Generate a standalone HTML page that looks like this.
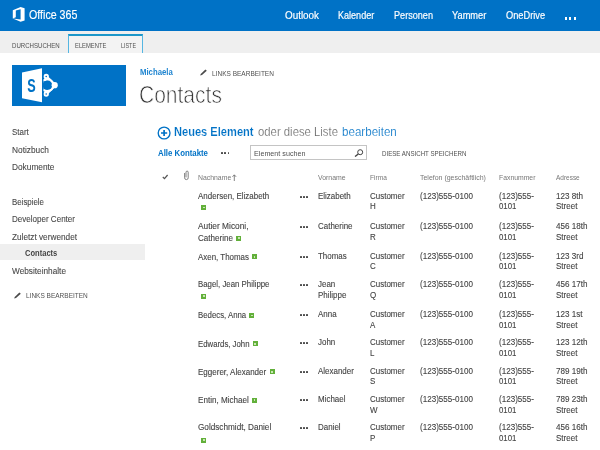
<!DOCTYPE html>
<html><head><meta charset="utf-8">
<style>
html,body{margin:0;padding:0;}
body{width:600px;height:450px;overflow:hidden;background:#fff;font-family:"Liberation Sans",sans-serif;position:relative;}
.a{position:absolute;}
.t{position:absolute;white-space:nowrap;transform-origin:0 0;}
.star{position:absolute;width:5px;height:5px;background:#62b03a;}
.star i{position:absolute;left:1.6px;top:1.6px;width:1.8px;height:1.8px;background:#c9e6b4;}
.dots{position:absolute;width:9px;height:2px;}
.dots i{position:absolute;top:0;width:1.9px;height:2px;background:#4a4a4a;border-radius:30%;}
.dots i:nth-child(1){left:0}.dots i:nth-child(2){left:3.15px}.dots i:nth-child(3){left:6.3px}
</style></head><body>
<div class="a" style="left:0;top:0;width:600px;height:30.5px;background:#0072c6;"></div>
<div class="a" style="left:0;top:30.5px;width:600px;height:22.2px;background:#efefef;"></div>
<div class="a" style="left:68px;top:34.3px;width:75px;height:18.4px;box-sizing:border-box;background:#f3f3f3;border-left:1.2px solid #55b6e2;border-right:1.2px solid #55b6e2;border-top:2.2px solid #1d97c9;"></div>
<!-- office logo -->
<svg class="a" style="left:12px;top:6px" width="14" height="17" viewBox="0 0 14 17"><path d="M0.8 4.2 L8.6 1 L12.6 2.2 V14.4 L8.6 15.8 L0.8 12.6 L8.6 13.6 V3.2 L3.8 4.4 V11.2 L0.8 12.6 Z" fill="#fff"/></svg>
<!-- top dots -->
<div class="a" style="left:564.6px;top:17.3px;width:2.3px;height:2.3px;background:#fff;"></div>
<div class="a" style="left:569.1px;top:17.3px;width:2.3px;height:2.3px;background:#fff;"></div>
<div class="a" style="left:573.6px;top:17.3px;width:2.3px;height:2.3px;background:#fff;"></div>
<!-- sharepoint logo -->
<div class="a" style="left:12px;top:65px;width:114px;height:40.5px;background:#0072c6;"></div>
<svg class="a" style="left:12px;top:65px;will-change:transform" width="114" height="41" viewBox="0 0 114 41">
<defs><clipPath id="cp"><rect x="31.4" y="0" width="40" height="41"/></clipPath></defs>
<g clip-path="url(#cp)">
<path d="M34 11.5 L42.8 20.2 L34 29" fill="none" stroke="#fff" stroke-width="3.1" stroke-linejoin="round"/>
<circle cx="35.2" cy="20.2" r="5.8" fill="none" stroke="#fff" stroke-width="2.6"/>
<circle cx="35.7" cy="20.2" r="4.6" fill="#0072c6"/><rect x="30" y="16.2" width="5" height="8" fill="#0072c6"/>
<circle cx="34.2" cy="11.5" r="2.7" fill="#fff"/><circle cx="42.7" cy="20.2" r="3.1" fill="#fff"/><circle cx="34.2" cy="29" r="2.7" fill="#fff"/>
<circle cx="34.2" cy="11.5" r="0.8" fill="#0072c6"/><circle cx="34.2" cy="29" r="0.8" fill="#0072c6"/>
</g>
<path d="M10 7.5 L30 3.2 V37.2 L10 33.2 Z" fill="#fff"/>
<text transform="translate(15.2,26.7) scale(0.72,1)" font-family="Liberation Sans" font-weight="bold" font-size="17.6" fill="#0072c6">S</text>
</svg>
<!-- nav selected -->
<div class="a" style="left:0;top:244.2px;width:145px;height:16.3px;background:#efefef;"></div>
<!-- pencils -->
<svg class="a" style="left:200px;top:69px" width="8" height="7" viewBox="0 0 8 7"><path d="M0.2 6.6 L0.7 4.9 L5.4 0.4 L6.8 1.7 L2 6.1 Z" fill="#4a4a4a"/></svg>
<svg class="a" style="left:13.6px;top:291.8px" width="8" height="7" viewBox="0 0 8 7"><path d="M0.2 6.6 L0.7 4.9 L5.4 0.4 L6.8 1.7 L2 6.1 Z" fill="#4a4a4a"/></svg>
<!-- plus circle -->
<svg class="a" style="left:157px;top:126px" width="14" height="14" viewBox="0 0 14 14"><circle cx="7.1" cy="7" r="5.9" fill="none" stroke="#0072c6" stroke-width="1.35"/><path d="M7.1 3.9 V10.1 M4 7 H10.2" stroke="#0072c6" stroke-width="1.7"/></svg>
<!-- view dots -->
<div class="dots" style="left:221.3px;top:152.2px"><i></i><i></i><i></i></div>
<!-- search box -->
<div class="a" style="left:249.5px;top:145.4px;width:117.6px;height:14.6px;box-sizing:border-box;border:1px solid #c4c4c4;background:#fff;"></div>
<svg class="a" style="left:354px;top:149px" width="10" height="8" viewBox="0 0 10 8"><circle cx="6.2" cy="3.2" r="2.5" fill="none" stroke="#444" stroke-width="1"/><path d="M4.3 5 L1 7.6" stroke="#444" stroke-width="1.3"/></svg>
<!-- header icons -->
<svg class="a" style="left:161.5px;top:174px" width="8" height="6" viewBox="0 0 8 6"><path d="M0.8 3 L2.5 4.7 L5.6 1" fill="none" stroke="#555" stroke-width="1.2"/></svg>
<svg class="a" style="left:182.6px;top:170.4px" width="7" height="11" viewBox="0 0 7 11"><path d="M1.6 3 V7.8 A1.8 1.8 0 0 0 5.2 7.8 V2.2 A1.1 1.1 0 0 0 3 2.2 V7.4" fill="none" stroke="#7a7a7a" stroke-width="0.95"/></svg>
<svg class="a" style="left:232px;top:173.5px" width="5" height="8" viewBox="0 0 5 8"><path d="M2.3 7 V1 M0.5 2.8 L2.3 0.8 L4.1 2.8" fill="none" stroke="#666" stroke-width="0.8"/></svg>
<div class="star" style="left:201.2px;top:205.0px"><i></i></div><div class="star" style="left:236.2px;top:235.5px"><i></i></div><div class="star" style="left:252.0px;top:254.2px"><i></i></div><div class="star" style="left:201.2px;top:293.8px"><i></i></div><div class="star" style="left:249.2px;top:313.0px"><i></i></div><div class="star" style="left:252.5px;top:341.3px"><i></i></div><div class="star" style="left:269.5px;top:369.2px"><i></i></div><div class="star" style="left:252.0px;top:397.5px"><i></i></div><div class="star" style="left:201.2px;top:437.5px"><i></i></div>
<div class="dots" style="left:299.9px;top:196px"><i></i><i></i><i></i></div><div class="dots" style="left:299.9px;top:226px"><i></i><i></i><i></i></div><div class="dots" style="left:299.9px;top:256px"><i></i><i></i><i></i></div><div class="dots" style="left:299.9px;top:284px"><i></i><i></i><i></i></div><div class="dots" style="left:299.9px;top:314px"><i></i><i></i><i></i></div><div class="dots" style="left:299.9px;top:342px"><i></i><i></i><i></i></div><div class="dots" style="left:299.9px;top:371px"><i></i><i></i><i></i></div><div class="dots" style="left:299.9px;top:399px"><i></i><i></i><i></i></div><div class="dots" style="left:299.9px;top:427px"><i></i><i></i><i></i></div>
<div style="position:absolute;left:0;top:0;width:600px;height:450px;will-change:transform;"><div class="t" style="left:28.8px;top:9px;font-size:12.8px;line-height:12.8px;color:#fff;-webkit-text-stroke:0.15px #fff;transform:scaleX(0.833)">Office 365</div>
<div class="t" style="left:284.7px;top:10px;font-size:11px;line-height:11px;color:#fff;-webkit-text-stroke:0.18px #fff;transform:scaleX(0.897)">Outlook</div>
<div class="t" style="left:338.0px;top:10px;font-size:11px;line-height:11px;color:#fff;-webkit-text-stroke:0.18px #fff;transform:scaleX(0.822)">Kalender</div>
<div class="t" style="left:393.8px;top:10px;font-size:11px;line-height:11px;color:#fff;-webkit-text-stroke:0.18px #fff;transform:scaleX(0.828)">Personen</div>
<div class="t" style="left:451.8px;top:10px;font-size:11px;line-height:11px;color:#fff;-webkit-text-stroke:0.18px #fff;transform:scaleX(0.842)">Yammer</div>
<div class="t" style="left:505.6px;top:10px;font-size:11px;line-height:11px;color:#fff;-webkit-text-stroke:0.18px #fff;transform:scaleX(0.841)">OneDrive</div>
<div class="t" style="left:12.0px;top:42px;font-size:7.8px;line-height:7.8px;color:#505050;transform:scaleX(0.781)">DURCHSUCHEN</div>
<div class="t" style="left:75.3px;top:42px;font-size:7.8px;line-height:7.8px;color:#505050;transform:scaleX(0.747)">ELEMENTE</div>
<div class="t" style="left:120.8px;top:42px;font-size:7.8px;line-height:7.8px;color:#505050;transform:scaleX(0.692)">LISTE</div>
<div class="t" style="left:139.9px;top:68px;font-size:8.4px;line-height:8.4px;color:#1e84d0;font-weight:bold;transform:scaleX(0.927)">Michaela</div>
<div class="t" style="left:212.1px;top:70px;font-size:7.6px;line-height:7.6px;color:#505050;transform:scaleX(0.858)">LINKS BEARBEITEN</div>
<div class="t" style="left:138.5px;top:84px;font-size:23.4px;line-height:23.4px;color:#333;-webkit-text-stroke:0.7px #fff;transform:scaleX(0.898)">Contacts</div>
<div class="t" style="left:12.0px;top:128px;font-size:9.0px;line-height:9.0px;color:#484848;-webkit-text-stroke:0.1px #484848;transform:scaleX(0.883)">Start</div>
<div class="t" style="left:12.0px;top:146px;font-size:9.0px;line-height:9.0px;color:#484848;-webkit-text-stroke:0.1px #484848;transform:scaleX(0.924)">Notizbuch</div>
<div class="t" style="left:12.0px;top:163px;font-size:9.0px;line-height:9.0px;color:#484848;-webkit-text-stroke:0.1px #484848;transform:scaleX(0.923)">Dokumente</div>
<div class="t" style="left:12.0px;top:198px;font-size:9.0px;line-height:9.0px;color:#484848;-webkit-text-stroke:0.1px #484848;transform:scaleX(0.876)">Beispiele</div>
<div class="t" style="left:12.0px;top:215px;font-size:9.0px;line-height:9.0px;color:#484848;-webkit-text-stroke:0.1px #484848;transform:scaleX(0.893)">Developer Center</div>
<div class="t" style="left:12.0px;top:233px;font-size:9.0px;line-height:9.0px;color:#484848;-webkit-text-stroke:0.1px #484848;transform:scaleX(0.915)">Zuletzt verwendet</div>
<div class="t" style="left:25.0px;top:249px;font-size:8.8px;line-height:8.8px;color:#444;font-weight:bold;transform:scaleX(0.858)">Contacts</div>
<div class="t" style="left:12.0px;top:267px;font-size:9.0px;line-height:9.0px;color:#484848;-webkit-text-stroke:0.1px #484848;transform:scaleX(0.917)">Websiteinhalte</div>
<div class="t" style="left:25.8px;top:292px;font-size:7.6px;line-height:7.6px;color:#505050;transform:scaleX(0.856)">LINKS BEARBEITEN</div>
<div class="t" style="left:174.2px;top:126px;font-size:12.2px;line-height:12.2px;color:#0072c6;font-weight:bold;-webkit-text-stroke:0.15px #fff;transform:scaleX(0.910)">Neues Element</div>
<div class="t" style="left:257.6px;top:126px;font-size:12px;line-height:12px;color:#606060;-webkit-text-stroke:0.22px #fff;transform:scaleX(0.944)">oder diese Liste</div>
<div class="t" style="left:342.0px;top:126px;font-size:12px;line-height:12px;color:#0072c6;-webkit-text-stroke:0.15px #fff;transform:scaleX(0.966)">bearbeiten</div>
<div class="t" style="left:158.0px;top:149px;font-size:8.6px;line-height:8.6px;color:#0072c6;font-weight:bold;transform:scaleX(0.910)">Alle Kontakte</div>
<div class="t" style="left:253.8px;top:150px;font-size:8.1px;line-height:8.1px;color:#505050;transform:scaleX(0.887)">Element suchen</div>
<div class="t" style="left:382.2px;top:150px;font-size:7.4px;line-height:7.4px;color:#505050;transform:scaleX(0.833)">DIESE ANSICHT SPEICHERN</div>
<div class="t" style="left:198.0px;top:174px;font-size:7px;line-height:7px;color:#777;transform:scaleX(0.981)">Nachname</div>
<div class="t" style="left:318.2px;top:174px;font-size:7px;line-height:7px;color:#777;transform:scaleX(0.985)">Vorname</div>
<div class="t" style="left:370.0px;top:174px;font-size:7px;line-height:7px;color:#777;transform:scaleX(0.939)">Firma</div>
<div class="t" style="left:419.5px;top:174px;font-size:7px;line-height:7px;color:#777;transform:scaleX(0.996)">Telefon (geschäftlich)</div>
<div class="t" style="left:499.3px;top:174px;font-size:7px;line-height:7px;color:#777;transform:scaleX(0.975)">Faxnummer</div>
<div class="t" style="left:556.3px;top:174px;font-size:7px;line-height:7px;color:#777;transform:scaleX(0.923)">Adresse</div>
<div class="t" style="left:198.3px;top:192px;font-size:9.0px;line-height:9.0px;color:#444;-webkit-text-stroke:0.12px #444;transform:scaleX(0.884)">Andersen, Elizabeth</div>
<div class="t" style="left:318.0px;top:192px;font-size:9.0px;line-height:9.0px;color:#444;-webkit-text-stroke:0.12px #444;transform:scaleX(0.885)">Elizabeth</div>
<div class="t" style="left:370.0px;top:192px;font-size:9.0px;line-height:9.0px;color:#444;-webkit-text-stroke:0.12px #444;transform:scaleX(0.887)">Customer</div>
<div class="t" style="left:370.0px;top:202px;font-size:9.0px;line-height:9.0px;color:#444;-webkit-text-stroke:0.12px #444;transform:scaleX(0.885)">H</div>
<div class="t" style="left:419.5px;top:192px;font-size:9.0px;line-height:9.0px;color:#444;-webkit-text-stroke:0.12px #444;transform:scaleX(0.896)">(123)555-0100</div>
<div class="t" style="left:499.3px;top:192px;font-size:9.0px;line-height:9.0px;color:#444;-webkit-text-stroke:0.12px #444;transform:scaleX(0.897)">(123)555-</div>
<div class="t" style="left:499.3px;top:202px;font-size:9.0px;line-height:9.0px;color:#444;-webkit-text-stroke:0.12px #444;transform:scaleX(0.869)">0101</div>
<div class="t" style="left:556.0px;top:192px;font-size:9.0px;line-height:9.0px;color:#444;-webkit-text-stroke:0.12px #444;transform:scaleX(0.900)">123 8th</div>
<div class="t" style="left:556.0px;top:202px;font-size:9.0px;line-height:9.0px;color:#444;-webkit-text-stroke:0.12px #444;transform:scaleX(0.891)">Street</div>
<div class="t" style="left:198.3px;top:222px;font-size:9.0px;line-height:9.0px;color:#444;-webkit-text-stroke:0.12px #444;transform:scaleX(0.926)">Autier Miconi,</div>
<div class="t" style="left:198.3px;top:234px;font-size:9.0px;line-height:9.0px;color:#444;-webkit-text-stroke:0.12px #444;transform:scaleX(0.897)">Catherine</div>
<div class="t" style="left:318.0px;top:222px;font-size:9.0px;line-height:9.0px;color:#444;-webkit-text-stroke:0.12px #444;transform:scaleX(0.885)">Catherine</div>
<div class="t" style="left:370.0px;top:222px;font-size:9.0px;line-height:9.0px;color:#444;-webkit-text-stroke:0.12px #444;transform:scaleX(0.887)">Customer</div>
<div class="t" style="left:370.0px;top:233px;font-size:9.0px;line-height:9.0px;color:#444;-webkit-text-stroke:0.12px #444;transform:scaleX(0.885)">R</div>
<div class="t" style="left:419.5px;top:222px;font-size:9.0px;line-height:9.0px;color:#444;-webkit-text-stroke:0.12px #444;transform:scaleX(0.896)">(123)555-0100</div>
<div class="t" style="left:499.3px;top:222px;font-size:9.0px;line-height:9.0px;color:#444;-webkit-text-stroke:0.12px #444;transform:scaleX(0.897)">(123)555-</div>
<div class="t" style="left:499.3px;top:233px;font-size:9.0px;line-height:9.0px;color:#444;-webkit-text-stroke:0.12px #444;transform:scaleX(0.869)">0101</div>
<div class="t" style="left:556.0px;top:222px;font-size:9.0px;line-height:9.0px;color:#444;-webkit-text-stroke:0.12px #444;transform:scaleX(0.900)">456 18th</div>
<div class="t" style="left:556.0px;top:233px;font-size:9.0px;line-height:9.0px;color:#444;-webkit-text-stroke:0.12px #444;transform:scaleX(0.891)">Street</div>
<div class="t" style="left:198.3px;top:253px;font-size:9.0px;line-height:9.0px;color:#444;-webkit-text-stroke:0.12px #444;transform:scaleX(0.881)">Axen, Thomas</div>
<div class="t" style="left:318.0px;top:252px;font-size:9.0px;line-height:9.0px;color:#444;-webkit-text-stroke:0.12px #444;transform:scaleX(0.885)">Thomas</div>
<div class="t" style="left:370.0px;top:252px;font-size:9.0px;line-height:9.0px;color:#444;-webkit-text-stroke:0.12px #444;transform:scaleX(0.887)">Customer</div>
<div class="t" style="left:370.0px;top:262px;font-size:9.0px;line-height:9.0px;color:#444;-webkit-text-stroke:0.12px #444;transform:scaleX(0.885)">C</div>
<div class="t" style="left:419.5px;top:252px;font-size:9.0px;line-height:9.0px;color:#444;-webkit-text-stroke:0.12px #444;transform:scaleX(0.896)">(123)555-0100</div>
<div class="t" style="left:499.3px;top:252px;font-size:9.0px;line-height:9.0px;color:#444;-webkit-text-stroke:0.12px #444;transform:scaleX(0.897)">(123)555-</div>
<div class="t" style="left:499.3px;top:262px;font-size:9.0px;line-height:9.0px;color:#444;-webkit-text-stroke:0.12px #444;transform:scaleX(0.869)">0101</div>
<div class="t" style="left:556.0px;top:252px;font-size:9.0px;line-height:9.0px;color:#444;-webkit-text-stroke:0.12px #444;transform:scaleX(0.900)">123 3rd</div>
<div class="t" style="left:556.0px;top:262px;font-size:9.0px;line-height:9.0px;color:#444;-webkit-text-stroke:0.12px #444;transform:scaleX(0.891)">Street</div>
<div class="t" style="left:198.3px;top:280px;font-size:9.0px;line-height:9.0px;color:#444;-webkit-text-stroke:0.12px #444;transform:scaleX(0.871)">Bagel, Jean Philippe</div>
<div class="t" style="left:318.0px;top:280px;font-size:9.0px;line-height:9.0px;color:#444;-webkit-text-stroke:0.12px #444;transform:scaleX(0.885)">Jean</div>
<div class="t" style="left:318.0px;top:291px;font-size:9.0px;line-height:9.0px;color:#444;-webkit-text-stroke:0.12px #444;transform:scaleX(0.885)">Philippe</div>
<div class="t" style="left:370.0px;top:280px;font-size:9.0px;line-height:9.0px;color:#444;-webkit-text-stroke:0.12px #444;transform:scaleX(0.887)">Customer</div>
<div class="t" style="left:370.0px;top:291px;font-size:9.0px;line-height:9.0px;color:#444;-webkit-text-stroke:0.12px #444;transform:scaleX(0.885)">Q</div>
<div class="t" style="left:419.5px;top:280px;font-size:9.0px;line-height:9.0px;color:#444;-webkit-text-stroke:0.12px #444;transform:scaleX(0.896)">(123)555-0100</div>
<div class="t" style="left:499.3px;top:280px;font-size:9.0px;line-height:9.0px;color:#444;-webkit-text-stroke:0.12px #444;transform:scaleX(0.897)">(123)555-</div>
<div class="t" style="left:499.3px;top:291px;font-size:9.0px;line-height:9.0px;color:#444;-webkit-text-stroke:0.12px #444;transform:scaleX(0.869)">0101</div>
<div class="t" style="left:556.0px;top:280px;font-size:9.0px;line-height:9.0px;color:#444;-webkit-text-stroke:0.12px #444;transform:scaleX(0.900)">456 17th</div>
<div class="t" style="left:556.0px;top:291px;font-size:9.0px;line-height:9.0px;color:#444;-webkit-text-stroke:0.12px #444;transform:scaleX(0.891)">Street</div>
<div class="t" style="left:198.3px;top:311px;font-size:9.0px;line-height:9.0px;color:#444;-webkit-text-stroke:0.12px #444;transform:scaleX(0.868)">Bedecs, Anna</div>
<div class="t" style="left:318.0px;top:310px;font-size:9.0px;line-height:9.0px;color:#444;-webkit-text-stroke:0.12px #444;transform:scaleX(0.885)">Anna</div>
<div class="t" style="left:370.0px;top:310px;font-size:9.0px;line-height:9.0px;color:#444;-webkit-text-stroke:0.12px #444;transform:scaleX(0.887)">Customer</div>
<div class="t" style="left:370.0px;top:321px;font-size:9.0px;line-height:9.0px;color:#444;-webkit-text-stroke:0.12px #444;transform:scaleX(0.885)">A</div>
<div class="t" style="left:419.5px;top:310px;font-size:9.0px;line-height:9.0px;color:#444;-webkit-text-stroke:0.12px #444;transform:scaleX(0.896)">(123)555-0100</div>
<div class="t" style="left:499.3px;top:310px;font-size:9.0px;line-height:9.0px;color:#444;-webkit-text-stroke:0.12px #444;transform:scaleX(0.897)">(123)555-</div>
<div class="t" style="left:499.3px;top:321px;font-size:9.0px;line-height:9.0px;color:#444;-webkit-text-stroke:0.12px #444;transform:scaleX(0.869)">0101</div>
<div class="t" style="left:556.0px;top:310px;font-size:9.0px;line-height:9.0px;color:#444;-webkit-text-stroke:0.12px #444;transform:scaleX(0.900)">123 1st</div>
<div class="t" style="left:556.0px;top:321px;font-size:9.0px;line-height:9.0px;color:#444;-webkit-text-stroke:0.12px #444;transform:scaleX(0.891)">Street</div>
<div class="t" style="left:198.3px;top:340px;font-size:9.0px;line-height:9.0px;color:#444;-webkit-text-stroke:0.12px #444;transform:scaleX(0.865)">Edwards, John</div>
<div class="t" style="left:318.0px;top:338px;font-size:9.0px;line-height:9.0px;color:#444;-webkit-text-stroke:0.12px #444;transform:scaleX(0.885)">John</div>
<div class="t" style="left:370.0px;top:338px;font-size:9.0px;line-height:9.0px;color:#444;-webkit-text-stroke:0.12px #444;transform:scaleX(0.887)">Customer</div>
<div class="t" style="left:370.0px;top:349px;font-size:9.0px;line-height:9.0px;color:#444;-webkit-text-stroke:0.12px #444;transform:scaleX(0.885)">L</div>
<div class="t" style="left:419.5px;top:338px;font-size:9.0px;line-height:9.0px;color:#444;-webkit-text-stroke:0.12px #444;transform:scaleX(0.896)">(123)555-0100</div>
<div class="t" style="left:499.3px;top:338px;font-size:9.0px;line-height:9.0px;color:#444;-webkit-text-stroke:0.12px #444;transform:scaleX(0.897)">(123)555-</div>
<div class="t" style="left:499.3px;top:349px;font-size:9.0px;line-height:9.0px;color:#444;-webkit-text-stroke:0.12px #444;transform:scaleX(0.869)">0101</div>
<div class="t" style="left:556.0px;top:338px;font-size:9.0px;line-height:9.0px;color:#444;-webkit-text-stroke:0.12px #444;transform:scaleX(0.900)">123 12th</div>
<div class="t" style="left:556.0px;top:349px;font-size:9.0px;line-height:9.0px;color:#444;-webkit-text-stroke:0.12px #444;transform:scaleX(0.891)">Street</div>
<div class="t" style="left:198.3px;top:368px;font-size:9.0px;line-height:9.0px;color:#444;-webkit-text-stroke:0.12px #444;transform:scaleX(0.891)">Eggerer, Alexander</div>
<div class="t" style="left:318.0px;top:367px;font-size:9.0px;line-height:9.0px;color:#444;-webkit-text-stroke:0.12px #444;transform:scaleX(0.885)">Alexander</div>
<div class="t" style="left:370.0px;top:367px;font-size:9.0px;line-height:9.0px;color:#444;-webkit-text-stroke:0.12px #444;transform:scaleX(0.887)">Customer</div>
<div class="t" style="left:370.0px;top:377px;font-size:9.0px;line-height:9.0px;color:#444;-webkit-text-stroke:0.12px #444;transform:scaleX(0.885)">S</div>
<div class="t" style="left:419.5px;top:367px;font-size:9.0px;line-height:9.0px;color:#444;-webkit-text-stroke:0.12px #444;transform:scaleX(0.896)">(123)555-0100</div>
<div class="t" style="left:499.3px;top:367px;font-size:9.0px;line-height:9.0px;color:#444;-webkit-text-stroke:0.12px #444;transform:scaleX(0.897)">(123)555-</div>
<div class="t" style="left:499.3px;top:377px;font-size:9.0px;line-height:9.0px;color:#444;-webkit-text-stroke:0.12px #444;transform:scaleX(0.869)">0101</div>
<div class="t" style="left:556.0px;top:367px;font-size:9.0px;line-height:9.0px;color:#444;-webkit-text-stroke:0.12px #444;transform:scaleX(0.900)">789 19th</div>
<div class="t" style="left:556.0px;top:377px;font-size:9.0px;line-height:9.0px;color:#444;-webkit-text-stroke:0.12px #444;transform:scaleX(0.891)">Street</div>
<div class="t" style="left:198.3px;top:396px;font-size:9.0px;line-height:9.0px;color:#444;-webkit-text-stroke:0.12px #444;transform:scaleX(0.899)">Entin, Michael</div>
<div class="t" style="left:318.0px;top:395px;font-size:9.0px;line-height:9.0px;color:#444;-webkit-text-stroke:0.12px #444;transform:scaleX(0.885)">Michael</div>
<div class="t" style="left:370.0px;top:395px;font-size:9.0px;line-height:9.0px;color:#444;-webkit-text-stroke:0.12px #444;transform:scaleX(0.887)">Customer</div>
<div class="t" style="left:370.0px;top:406px;font-size:9.0px;line-height:9.0px;color:#444;-webkit-text-stroke:0.12px #444;transform:scaleX(0.885)">W</div>
<div class="t" style="left:419.5px;top:395px;font-size:9.0px;line-height:9.0px;color:#444;-webkit-text-stroke:0.12px #444;transform:scaleX(0.896)">(123)555-0100</div>
<div class="t" style="left:499.3px;top:395px;font-size:9.0px;line-height:9.0px;color:#444;-webkit-text-stroke:0.12px #444;transform:scaleX(0.897)">(123)555-</div>
<div class="t" style="left:499.3px;top:406px;font-size:9.0px;line-height:9.0px;color:#444;-webkit-text-stroke:0.12px #444;transform:scaleX(0.869)">0101</div>
<div class="t" style="left:556.0px;top:395px;font-size:9.0px;line-height:9.0px;color:#444;-webkit-text-stroke:0.12px #444;transform:scaleX(0.900)">789 23th</div>
<div class="t" style="left:556.0px;top:406px;font-size:9.0px;line-height:9.0px;color:#444;-webkit-text-stroke:0.12px #444;transform:scaleX(0.891)">Street</div>
<div class="t" style="left:198.3px;top:423px;font-size:9.0px;line-height:9.0px;color:#444;-webkit-text-stroke:0.12px #444;transform:scaleX(0.909)">Goldschmidt, Daniel</div>
<div class="t" style="left:318.0px;top:423px;font-size:9.0px;line-height:9.0px;color:#444;-webkit-text-stroke:0.12px #444;transform:scaleX(0.885)">Daniel</div>
<div class="t" style="left:370.0px;top:423px;font-size:9.0px;line-height:9.0px;color:#444;-webkit-text-stroke:0.12px #444;transform:scaleX(0.887)">Customer</div>
<div class="t" style="left:370.0px;top:434px;font-size:9.0px;line-height:9.0px;color:#444;-webkit-text-stroke:0.12px #444;transform:scaleX(0.885)">P</div>
<div class="t" style="left:419.5px;top:423px;font-size:9.0px;line-height:9.0px;color:#444;-webkit-text-stroke:0.12px #444;transform:scaleX(0.896)">(123)555-0100</div>
<div class="t" style="left:499.3px;top:423px;font-size:9.0px;line-height:9.0px;color:#444;-webkit-text-stroke:0.12px #444;transform:scaleX(0.897)">(123)555-</div>
<div class="t" style="left:499.3px;top:434px;font-size:9.0px;line-height:9.0px;color:#444;-webkit-text-stroke:0.12px #444;transform:scaleX(0.869)">0101</div>
<div class="t" style="left:556.0px;top:423px;font-size:9.0px;line-height:9.0px;color:#444;-webkit-text-stroke:0.12px #444;transform:scaleX(0.900)">456 16th</div>
<div class="t" style="left:556.0px;top:434px;font-size:9.0px;line-height:9.0px;color:#444;-webkit-text-stroke:0.12px #444;transform:scaleX(0.891)">Street</div></div>
</body></html>
